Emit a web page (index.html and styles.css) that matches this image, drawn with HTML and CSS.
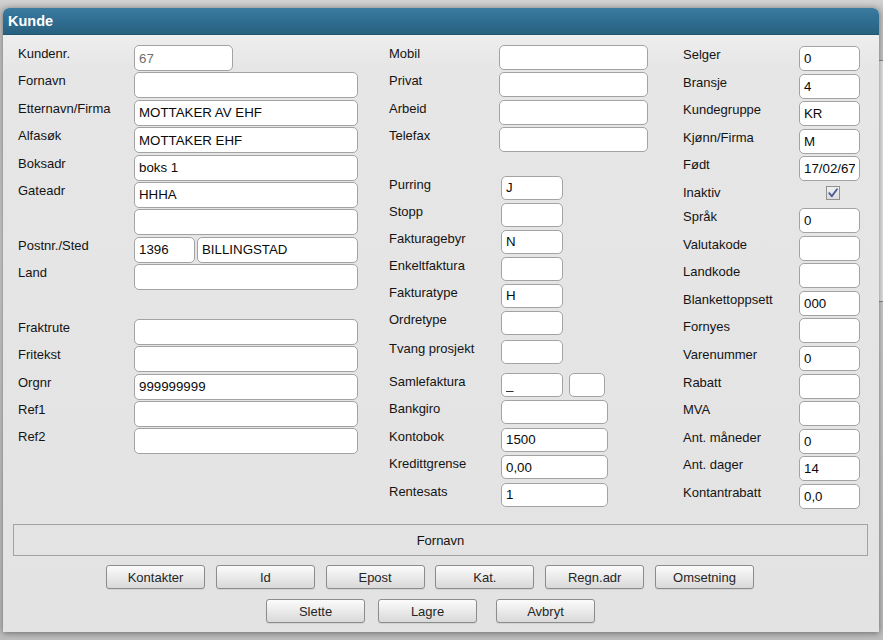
FILE: index.html
```html
<!DOCTYPE html>
<html lang="no">
<head>
<meta charset="utf-8">
<title>Kunde</title>
<link rel="stylesheet" href="styles.css">
</head>
<body>
<div class="page-lines"></div>
<div class="dialog">
  <div class="titlebar">Kunde</div>
  <div class="content">
    <div class="columns">
      <div class="col col1">
        <div class="row"><span class="lbl">Kundenr.</span><input class="in w99 ro" type="text" value="67" readonly></div>
        <div class="row"><span class="lbl">Fornavn</span><input class="in wfull" type="text" value=""></div>
        <div class="row"><span class="lbl">Etternavn/Firma</span><input class="in wfull" type="text" value="MOTTAKER AV EHF"></div>
        <div class="row"><span class="lbl">Alfasøk</span><input class="in wfull" type="text" value="MOTTAKER EHF"></div>
        <div class="row"><span class="lbl">Boksadr</span><input class="in wfull" type="text" value="boks 1"></div>
        <div class="row"><span class="lbl">Gateadr</span><input class="in wfull" type="text" value="HHHA"></div>
        <div class="row"><span class="lbl"></span><input class="in wfull" type="text" value=""></div>
        <div class="row"><span class="lbl">Postnr./Sted</span><input class="in wpost" type="text" value="1396"><input class="in wsted" type="text" value="BILLINGSTAD"></div>
        <div class="row"><span class="lbl">Land</span><input class="in wfull" type="text" value=""></div>
        <div class="row spacer"></div>
        <div class="row"><span class="lbl">Fraktrute</span><input class="in wfull" type="text" value=""></div>
        <div class="row"><span class="lbl">Fritekst</span><input class="in wfull" type="text" value=""></div>
        <div class="row"><span class="lbl">Orgnr</span><input class="in wfull" type="text" value="999999999"></div>
        <div class="row"><span class="lbl">Ref1</span><input class="in wfull" type="text" value=""></div>
        <div class="row"><span class="lbl">Ref2</span><input class="in wfull" type="text" value=""></div>
      </div>

      <div class="col col2">
        <div class="row"><span class="lbl">Mobil</span><input class="in wfull" type="text" value=""></div>
        <div class="row"><span class="lbl">Privat</span><input class="in wfull" type="text" value=""></div>
        <div class="row"><span class="lbl">Arbeid</span><input class="in wfull" type="text" value=""></div>
        <div class="row"><span class="lbl">Telefax</span><input class="in wfull" type="text" value=""></div>
        <div class="row low first"><span class="lbl">Purring</span><input class="in w62" type="text" value="J"></div>
        <div class="row low"><span class="lbl">Stopp</span><input class="in w62" type="text" value=""></div>
        <div class="row low"><span class="lbl">Fakturagebyr</span><input class="in w62" type="text" value="N"></div>
        <div class="row low"><span class="lbl">Enkeltfaktura</span><input class="in w62" type="text" value=""></div>
        <div class="row low"><span class="lbl">Fakturatype</span><input class="in w62" type="text" value="H"></div>
        <div class="row low"><span class="lbl">Ordretype</span><input class="in w62" type="text" value=""></div>
        <div class="row low tvang"><span class="lbl">Tvang prosjekt</span><input class="in w62" type="text" value=""></div>
        <div class="row low samle"><span class="lbl">Samlefaktura</span><input class="in w62" type="text" value="_"><input class="in w36" type="text" value=""></div>
        <div class="row low wide"><span class="lbl">Bankgiro</span><input class="in w107" type="text" value=""></div>
        <div class="row low wide"><span class="lbl">Kontobok</span><input class="in w107" type="text" value="1500"></div>
        <div class="row low wide"><span class="lbl">Kredittgrense</span><input class="in w107" type="text" value="0,00"></div>
        <div class="row low wide"><span class="lbl">Rentesats</span><input class="in w107" type="text" value="1"></div>
      </div>

      <div class="col col3">
        <div class="row"><span class="lbl">Selger</span><input class="in wfull" type="text" value="0"></div>
        <div class="row"><span class="lbl">Bransje</span><input class="in wfull" type="text" value="4"></div>
        <div class="row"><span class="lbl">Kundegruppe</span><input class="in wfull" type="text" value="KR"></div>
        <div class="row"><span class="lbl">Kjønn/Firma</span><input class="in wfull" type="text" value="M"></div>
        <div class="row"><span class="lbl">Født</span><input class="in wfull" type="text" value="17/02/67"></div>
        <div class="row check"><span class="lbl">Inaktiv</span><span class="checkbox"><svg width="12" height="12" viewBox="0 0 12 12"><path d="M2.2 6.2 L4.8 9.2 L10 2.2" fill="none" stroke="#4b5a9c" stroke-width="1.9" stroke-linecap="round" stroke-linejoin="round"/></svg></span></div>
        <div class="row"><span class="lbl">Språk</span><input class="in wfull" type="text" value="0"></div>
        <div class="row"><span class="lbl">Valutakode</span><input class="in wfull" type="text" value=""></div>
        <div class="row"><span class="lbl">Landkode</span><input class="in wfull" type="text" value=""></div>
        <div class="row"><span class="lbl">Blankettoppsett</span><input class="in wfull" type="text" value="000"></div>
        <div class="row"><span class="lbl">Fornyes</span><input class="in wfull" type="text" value=""></div>
        <div class="row"><span class="lbl">Varenummer</span><input class="in wfull" type="text" value="0"></div>
        <div class="row"><span class="lbl">Rabatt</span><input class="in wfull" type="text" value=""></div>
        <div class="row"><span class="lbl">MVA</span><input class="in wfull" type="text" value=""></div>
        <div class="row"><span class="lbl">Ant. måneder</span><input class="in wfull" type="text" value="0"></div>
        <div class="row"><span class="lbl">Ant. dager</span><input class="in wfull" type="text" value="14"></div>
        <div class="row"><span class="lbl">Kontantrabatt</span><input class="in wfull" type="text" value="0,0"></div>
      </div>
    </div>

    <div class="infobox">Fornavn</div>

    <div class="btnrow btnrow1">
      <button class="btn">Kontakter</button>
      <button class="btn">Id</button>
      <button class="btn">Epost</button>
      <button class="btn">Kat.</button>
      <button class="btn">Regn.adr</button>
      <button class="btn">Omsetning</button>
    </div>
    <div class="btnrow btnrow2">
      <button class="btn">Slette</button>
      <button class="btn">Lagre</button>
      <button class="btn avbryt">Avbryt</button>
    </div>
  </div>
</div>
</body>
</html>
```

FILE: styles.css
```css
html, body {
  margin: 0;
  padding: 0;
}
body {
  width: 883px;
  height: 640px;
  overflow: hidden;
  position: relative;
  background: linear-gradient(#d2d2d2, #c4c4c4 10px, #cfcfcf 40%, #bdbdbd);
  font-family: "Liberation Sans", Arial, sans-serif;
}
.page-lines {
  position: absolute;
  right: 0;
  top: 60px;
  width: 6px;
  height: 240px;
  border-top: 1px solid #8a8a8a;
  border-bottom: 1px solid #8a8a8a;
  background: #e4e4e4;
}
.dialog {
  position: absolute;
  left: 3px;
  top: 8px;
  width: 876px;
  height: 624px;
  box-sizing: border-box;
  border-radius: 6px 6px 0 0;
  background: linear-gradient(#f4f4f4, #e6e6e6 60px, #e3e3e3);
  box-shadow: 0 1px 6px rgba(0, 0, 0, 0.45);
  display: flex;
  flex-direction: column;
}
.titlebar {
  height: 27px;
  line-height: 27px;
  padding-left: 5px;
  color: #ffffff;
  font-weight: bold;
  font-size: 14.5px;
  border-radius: 6px 6px 0 0;
  background: linear-gradient(#3c7ca1, #2f6d91 50%, #28617f);
  border-bottom: 1px solid #245570;
  box-sizing: border-box;
}
.content {
  padding: 10px 0 0 15px;
  display: flex;
  flex-direction: column;
}
.columns {
  display: flex;
  height: 463px;
}
.col {
  display: flex;
  flex-direction: column;
}
.col1 { width: 340px; gap: 1.4px; }
.col2 { width: 259px; margin-left: 31px; gap: 2.3px; }
.col3 { width: 177px; margin-left: 35px; gap: 2.6px; padding-top: 1px; }

.row {
  display: flex;
  align-items: flex-start;
  height: 26px;
  flex: none;
}
.col2 .row, .col3 .row { height: 25px; }
.row.spacer { height: 26px; }
.lbl {
  flex: none;
  width: 116px;
  padding-top: 1px;
  font-size: 13px;
  line-height: 15px;
  color: #141414;
  white-space: nowrap;
}
.col2 .lbl { width: 110px; }
.col2 .row.low .lbl { width: 112px; }
.col2 .row.low { height: 24px; margin-top: 0.7px; }
.col2 .row.low.first { margin-top: 21.7px; }
.col2 .row.low.tvang { margin-top: 2.7px; }
.col2 .row.low.samle { margin-top: 6.7px; }
.col2 .row.low.wide { margin-top: 1.2px; }
.col3 .row.check { height: 21.4px; }

.in {
  box-sizing: border-box;
  height: 100%;
  margin: 0;
  padding: 0 4px;
  border: 1px solid #a3a3a3;
  border-radius: 5px;
  background: #ffffff;
  font-family: "Liberation Sans", Arial, sans-serif;
  font-size: 13.3px;
  color: #0a0a0a;
  outline: none;
}
.in.ro { color: #707070; }
.wfull { width: 100%; flex: 1 1 auto; min-width: 0; }
.w99 { width: 99px; }
.wpost { width: 61px; }
.wsted { width: 161px; margin-left: 2px; }
.w62 { width: 62px; }
.w36 { width: 36px; margin-left: 6px; }
.w107 { width: 107px; }

.checkbox {
  box-sizing: border-box;
  width: 14px;
  height: 14px;
  margin-left: 27px;
  margin-top: 2px;
  border: 1px solid #8f9090;
  background: linear-gradient(#f0f0f0, #dcdcdc);
  display: flex;
  align-items: center;
  justify-content: center;
}
.checkbox svg { display: block; }

.infobox {
  box-sizing: border-box;
  margin: 16px 0 0 -5px;
  width: 855px;
  height: 32px;
  border: 1px solid #a2a2a2;
  display: flex;
  align-items: center;
  justify-content: center;
  font-size: 13px;
  color: #141414;
}

.btnrow {
  display: flex;
}
.btnrow1 {
  margin-top: 9px;
  padding-left: 88px;
  gap: 10.8px;
}
.btnrow2 {
  margin-top: 10px;
  padding-left: 248px;
  gap: 13px;
}
.btn {
  box-sizing: border-box;
  width: 99px;
  height: 24px;
  margin: 0;
  padding: 0;
  border: 1px solid #8c8c8c;
  border-radius: 3px;
  background: linear-gradient(#fbfbfb, #ececec 45%, #d9d9d9);
  font-family: "Liberation Sans", Arial, sans-serif;
  font-size: 13px;
  color: #262626;
  box-shadow: 0 1px 1px rgba(0, 0, 0, 0.08);
}
.btn.avbryt { margin-left: 6px; }
```
